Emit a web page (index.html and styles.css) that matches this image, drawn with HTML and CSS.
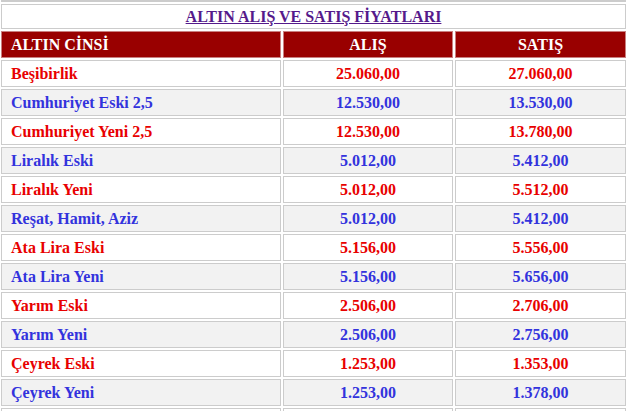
FILE: index.html
```html
<!DOCTYPE html>
<html lang="tr">
<head>
<meta charset="utf-8">
<title>Altın Alış ve Satış Fiyatları</title>
<link rel="stylesheet" href="styles.css">
</head>
<body>
<table class="prices">
  <colgroup>
    <col class="c-name">
    <col class="c-buy">
    <col class="c-sell">
  </colgroup>
  <tr class="prev"><td colspan="3"></td></tr>
  <tr><td class="title" colspan="3"><a href="#">ALTIN ALIŞ VE SATIŞ FİYATLARI</a></td></tr>
  <tr class="head">
    <th class="name">ALTIN CİNSİ</th>
    <th>ALIŞ</th>
    <th>SATIŞ</th>
  </tr>
  <tr class="red"><td class="name">Beşibirlik</td><td>25.060,00</td><td>27.060,00</td></tr>
  <tr class="blue"><td class="name">Cumhuriyet Eski 2,5</td><td>12.530,00</td><td>13.530,00</td></tr>
  <tr class="red"><td class="name">Cumhuriyet Yeni 2,5</td><td>12.530,00</td><td>13.780,00</td></tr>
  <tr class="blue"><td class="name">Liralık Eski</td><td>5.012,00</td><td>5.412,00</td></tr>
  <tr class="red"><td class="name">Liralık Yeni</td><td>5.012,00</td><td>5.512,00</td></tr>
  <tr class="blue"><td class="name">Reşat, Hamit, Aziz</td><td>5.012,00</td><td>5.412,00</td></tr>
  <tr class="red"><td class="name">Ata Lira Eski</td><td>5.156,00</td><td>5.556,00</td></tr>
  <tr class="blue"><td class="name">Ata Lira Yeni</td><td>5.156,00</td><td>5.656,00</td></tr>
  <tr class="red"><td class="name">Yarım Eski</td><td>2.506,00</td><td>2.706,00</td></tr>
  <tr class="blue"><td class="name">Yarım Yeni</td><td>2.506,00</td><td>2.756,00</td></tr>
  <tr class="red"><td class="name">Çeyrek Eski</td><td>1.253,00</td><td>1.353,00</td></tr>
  <tr class="blue"><td class="name">Çeyrek Yeni</td><td>1.253,00</td><td>1.378,00</td></tr>
  <tr class="red"><td class="name">&nbsp;</td><td>&nbsp;</td><td>&nbsp;</td></tr>
</table>
</body>
</html>
```
FILE: styles.css
```css
html, body {
  margin: 0;
  padding: 0;
  background: #ffffff;
}

body {
  font-family: "Liberation Serif", "Times New Roman", serif;
  overflow: hidden;
}

.prices {
  width: 629px;
  margin: -2px 0 0 -1px;
  border-collapse: separate;
  border-spacing: 2px;
  table-layout: fixed;
}

.c-name { width: 280px; }
.c-buy { width: 170px; }

.prices td,
.prices th {
  border: 1px solid #cccccc;
  padding: 0;
  height: 25px;
  line-height: 25px;
  font-size: 16px;
  font-weight: bold;
  text-align: center;
  white-space: nowrap;
}

.prices .name {
  text-align: left;
  padding-left: 9px;
}

.prev td {
  height: 0;
  line-height: 0;
  font-size: 0;
  padding: 0;
}

.prices td.title {
  height: 23px;
  line-height: 23px;
  background: #ffffff;
  font-size: 16px;
}

.title a {
  color: #551a8b;
  text-decoration: underline;
}

.head th {
  background: #990000;
  color: #ffffff;
  font-size: 16px;
  border-color: #c98080;
}

.red td {
  background: #ffffff;
  color: #e80000;
}

.blue td {
  background: #f2f2f2;
  color: #3333dd;
}
```
